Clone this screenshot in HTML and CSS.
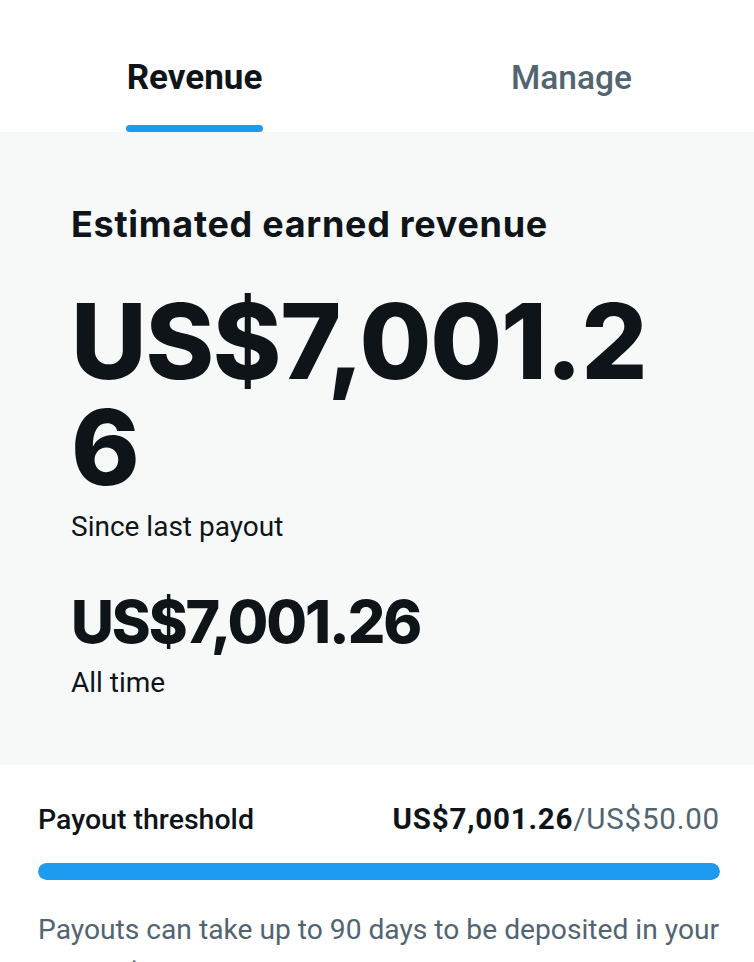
FILE: index.html
```html
<!DOCTYPE html>
<html>
<head>
<meta charset="utf-8">
<link rel="stylesheet" href="styles.css">
</head>
<body>
<div class="tabs">
  <div class="tab active"><span class="tab-label">Revenue</span><span class="tab-bar"></span></div>
  <div class="tab"><span class="tab-label">Manage</span></div>
</div>
<section class="panel">
  <h1 class="title">Estimated earned revenue</h1>
  <div class="big">US$7,001.2<br>6</div>
  <div class="sub">Since last payout</div>
  <div class="mid">US$7,001.26</div>
  <div class="sub sub-last">All time</div>
</section>
<section class="payout">
  <div class="payout-row">
    <span class="payout-label">Payout threshold</span>
    <span class="payout-value"><b>US$7,001.26</b>/US$50.00</span>
  </div>
  <div class="progress"><div class="progress-fill" style="width:100%"></div></div>
  <p class="note">Payouts can take up to 90 days to be deposited in your account.</p>
</section>
</body>
</html>
```
FILE: styles.css
```css
* { box-sizing: border-box; }
html, body { margin: 0; padding: 0; background: #fff; }
body {
  font-family: Roboto, "Liberation Sans", sans-serif;
  color: #0f1419;
  width: 754px;
  height: 962px;
  overflow: hidden;
}
.tabs {
  display: grid;
  grid-template-columns: 1fr 1fr;
  height: 132px;
}
.tab {
  display: flex;
  flex-direction: column;
  align-items: center;
  justify-content: flex-end;
}
.tab-label {
  font-family: Roboto, sans-serif;
  font-size: 33.5px;
  font-weight: 500;
  color: #536471;
  line-height: 40px;
  margin-bottom: 34px;
  padding-left: 12px;
}
.tab.active .tab-label {
  color: #0f1419;
  font-weight: 700;
  font-size: 35px;
  margin-bottom: 27px;
}
.tab-bar {
  display: block;
  width: 137px;
  height: 7px;
  border-radius: 4px;
  background: #1d9bf0;
  margin-left: 12px;
}
.panel {
  background: #f7f9f9;
  padding: 72px 20px 0 71px;
  height: 633px;
}
.title {
  margin: 0;
  font-family: Inter, sans-serif;
  font-size: 36px;
  font-weight: 700;
  line-height: 40px;
  letter-spacing: 0.7px;
}
.big {
  margin-top: 44px;
  font-family: Inter, sans-serif;
  font-weight: 800;
  font-size: 104px;
  line-height: 106px;
  letter-spacing: -1.2px;
}
.sub {
  font-size: 28px;
  line-height: 34px;
  margin-top: 10px;
}
.mid {
  margin-top: 46px;
  font-family: Inter, sans-serif;
  font-weight: 800;
  font-size: 59px;
  line-height: 64px;
  letter-spacing: -2.1px;
}
.sub-last { margin-top: 12px; }
.payout {
  padding: 36px 34px 0 38px;
}
.payout-row {
  display: flex;
  justify-content: space-between;
  align-items: baseline;
  font-size: 28.5px;
  line-height: 36px;
}
.payout-label { font-weight: 500; }
.payout-value { color: #536471; font-size: 29.5px; letter-spacing: 0.8px; }
.payout-value b { color: #0f1419; font-weight: 700; }
.progress {
  margin-top: 25px;
  height: 17px;
  background: #cfd9de;
  border-radius: 9px;
  overflow: hidden;
}
.progress-fill { height: 100%; background: #1d9bf0; border-radius: 9px; }
.note {
  margin: 30px 0 0;
  font-size: 28.2px;
  line-height: 40px;
  color: #536471;
}
```
